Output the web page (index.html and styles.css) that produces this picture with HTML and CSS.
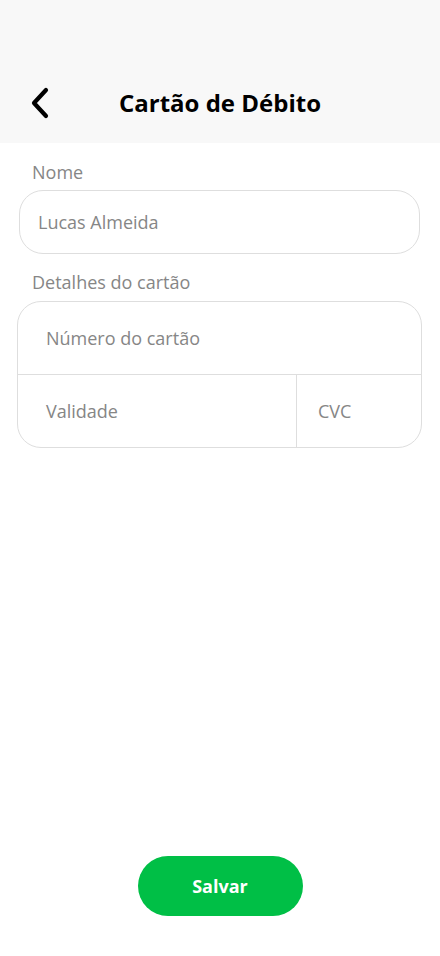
FILE: index.html
```html
<!DOCTYPE html>
<html lang="pt">
<head>
<meta charset="utf-8">
<link rel="stylesheet" href="styles.css">
</head>
<body>
<div class="page">
  <header class="header">
    <div class="back">
      <svg width="22" height="32" viewBox="0 0 22 32"><path d="M17 3 L5 16 L17 29" fill="none" stroke="#000" stroke-width="4.2" stroke-linecap="round" stroke-linejoin="round"/></svg>
    </div>
    <h1 class="title">Cartão de Débito</h1>
  </header>
  <main class="form">
    <div class="label">Nome</div>
    <div class="input">Lucas Almeida</div>
    <div class="label label2">Detalhes do cartão</div>
    <div class="card">
      <div class="row1">Número do cartão</div>
      <div class="row2">
        <div class="validade">Validade</div>
        <div class="cvc">CVC</div>
      </div>
    </div>
  </main>
  <div class="footer">
    <button class="save">Salvar</button>
  </div>
</div>
</body>
</html>
```
FILE: styles.css
```css
html, body { margin: 0; padding: 0; }
body { font-family: "Open Sans", "Noto Sans", sans-serif; background: #fff; }
.page { width: 440px; height: 956px; display: flex; flex-direction: column; }
.header { height: 143px; background: #f8f8f8; position: relative; display: flex; align-items: flex-end; justify-content: center; box-sizing: border-box; padding-bottom: 24px; }
.back { position: absolute; left: 29px; top: 87px; width: 22px; height: 32px; }
.back svg { display: block; }
.title { margin: 0; font-size: 24px; font-weight: 700; color: #000; line-height: 32px; }
.form { display: flex; flex-direction: column; padding: 0 18px 0 17px; flex: 1; }
.label { font-size: 18px; color: #868686; line-height: 24px; margin: 17px 0 0 15px; }
.label2 { margin-top: 16px; }
.input { margin: 6px 2px 0 2px; height: 64px; box-sizing: border-box; border: 1px solid #dedede; border-radius: 24px; padding: 0 18px; display: flex; align-items: center; font-size: 18px; color: #868686; }
.card { margin-top: 7px; border: 1px solid #dedede; border-radius: 24px; height: 147px; box-sizing: border-box; display: flex; flex-direction: column; font-size: 18px; color: #868686; }
.row1 { height: 72px; border-bottom: 1px solid #dedede; display: flex; align-items: center; padding-left: 28px; }
.row2 { flex: 1; display: flex; }
.validade { width: 279px; border-right: 1px solid #dedede; display: flex; align-items: center; padding-left: 28px; box-sizing: border-box; }
.cvc { flex: 1; display: flex; align-items: center; padding-left: 21px; }
.footer { display: flex; justify-content: center; padding-bottom: 40px; }
.save { width: 165px; height: 60px; border: none; border-radius: 30px; background: #00bf46; color: #fff; font-family: "Open Sans", "Noto Sans", sans-serif; font-size: 18px; font-weight: 700; }
```
